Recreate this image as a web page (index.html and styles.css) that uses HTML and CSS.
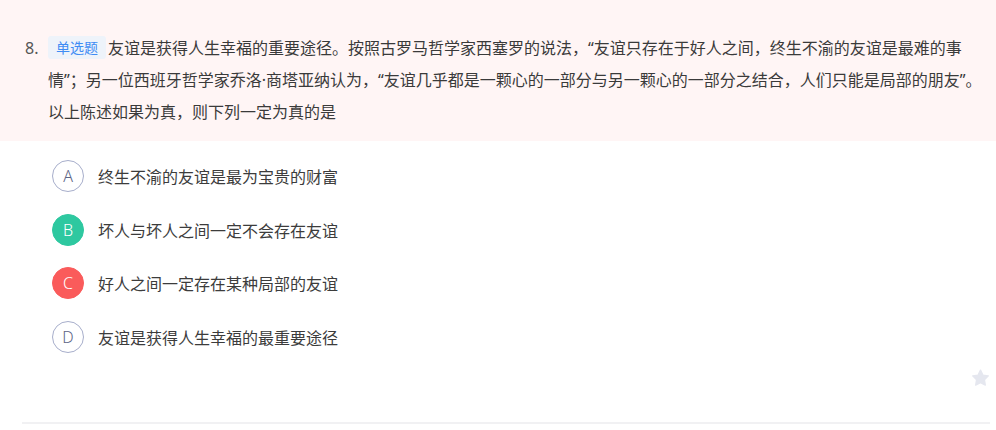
FILE: index.html
```html
<!DOCTYPE html>
<html lang="zh-CN">
<head>
<meta charset="utf-8">
<title>单选题</title>
<link rel="stylesheet" href="styles.css">
</head>
<body>
<div class="question">
  <div class="stem">
    <div class="num">8.</div>
    <div class="body"><span class="badge">单选题</span><span class="stem-text">友谊是获得人生幸福的重要途径。按照古罗马哲学家西塞罗的说法，“友谊只存在于好人之间，终生不渝的友谊是最难的事情”；另一位西班牙哲学家乔洛·商塔亚纳认为，“友谊几乎都是一颗心的一部分与另一颗心的一部分之结合，人们只能是局部的朋友”。以上陈述如果为真，则下列一定为真的是</span></div>
  </div>
  <ul class="options">
    <li class="option"><span class="mark">A</span><span class="text">终生不渝的友谊是最为宝贵的财富</span></li>
    <li class="option"><span class="mark mark-right">B</span><span class="text">坏人与坏人之间一定不会存在友谊</span></li>
    <li class="option"><span class="mark mark-wrong">C</span><span class="text">好人之间一定存在某种局部的友谊</span></li>
    <li class="option"><span class="mark">D</span><span class="text">友谊是获得人生幸福的最重要途径</span></li>
  </ul>
  <div class="tools">
    <svg class="star" viewBox="0 0 24 24" width="21" height="20" aria-hidden="true"><path d="M12 2.6l2.9 5.9 6.5.95-4.7 4.6 1.1 6.45L12 17.45l-5.8 3.05 1.1-6.45-4.7-4.6 6.5-.95z"/></svg>
  </div>
  <div class="divider"></div>
</div>
</body>
</html>
```

FILE: styles.css
```css
html, body {
  margin: 0;
  padding: 0;
  background: #ffffff;
}

body {
  font-family: "Noto Sans", "Noto Sans CJK SC", sans-serif;
  color: #333333;
  font-size: 16px;
}

.stem {
  display: flex;
  background: #fff5f5;
  padding: 32px 8px 13px 25px;
  line-height: 32px;
}

.num {
  width: 23px;
  flex: none;
  color: #555555;
}

.body {
  flex: 1;
  color: #3a3a3a;
}

.badge {
  display: inline-block;
  height: 23px;
  line-height: 23px;
  padding: 0 8px;
  margin-right: 2px;
  border-radius: 3px;
  background: #eef3fa;
  color: #3f8cf4;
  font-size: 14px;
  vertical-align: 1px;
}

.options {
  list-style: none;
  margin: 0;
  padding: 19px 0 0 52px;
  display: flex;
  flex-direction: column;
  gap: 21.5px;
}

.option {
  display: flex;
  align-items: center;
  height: 32px;
  gap: 14px;
}

.mark {
  box-sizing: border-box;
  width: 32px;
  height: 32px;
  border-radius: 50%;
  border: 1px solid #a7aecb;
  color: #5d6585;
  font-size: 16px;
  font-weight: 300;
  display: flex;
  align-items: center;
  justify-content: center;
  flex: none;
}

.mark-right {
  background: #2ec8a0;
  border-color: #2ec8a0;
  color: #ffffff;
}

.mark-wrong {
  background: #fa5b5b;
  border-color: #fa5b5b;
  color: #ffffff;
}

.text {
  color: #3c3c3c;
}

.tools {
  display: flex;
  justify-content: flex-end;
  margin-top: 15.5px;
  padding-right: 5px;
  height: 20px;
}

.star {
  fill: #e5e7ef;
  stroke: #e5e7ef;
  stroke-width: 1.6;
  stroke-linejoin: round;
}

.divider {
  margin: 34px 6px 0 22px;
  height: 2px;
  background: #f1f1f3;
}
```
